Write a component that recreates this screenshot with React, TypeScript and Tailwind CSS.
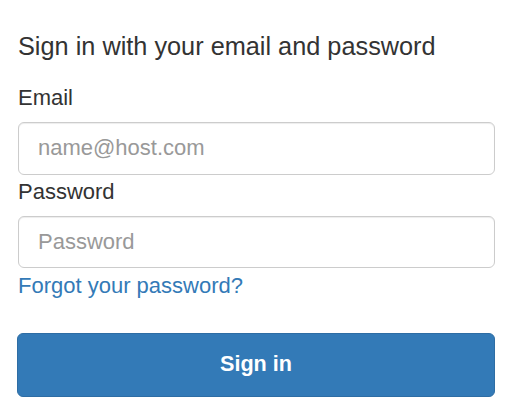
export default function App() {
  return (
    <main className="min-h-screen w-[514px] bg-white px-[18px] pt-[31px] font-['Liberation_Sans',Arial,sans-serif] text-[#333333]">
      <h2 className="text-[25.3px] leading-[30px]">Sign in with your email and password</h2>

      <form className="mt-[22px] flex flex-col" onSubmit={(e) => e.preventDefault()}>
        <label htmlFor="email" className="text-[22px] leading-[30px]">
          Email
        </label>
        <input
          id="email"
          type="email"
          placeholder="name@host.com"
          className="mt-[8.6px] h-[53px] w-[477px] rounded-[6px] border border-[#cccccc] bg-white px-[19px] text-[22px] text-[#555555] shadow-[inset_0_1px_1px_rgba(0,0,0,0.075)] outline-none placeholder:text-[#999999]"
        />

        <label htmlFor="password" className="mt-[2.4px] text-[22px] leading-[30px]">
          Password
        </label>
        <input
          id="password"
          type="password"
          placeholder="Password"
          className="mt-[8.6px] h-[52px] w-[477px] rounded-[6px] border border-[#cccccc] bg-white px-[19px] text-[22px] text-[#555555] shadow-[inset_0_1px_1px_rgba(0,0,0,0.075)] outline-none placeholder:text-[#999999]"
        />

        <a href="#" className="mt-[3.4px] self-start text-[22px] leading-[30px] text-[#337ab7]">
          Forgot your password?
        </a>

        <button
          type="submit"
          className="mt-[31.6px] h-[64px] w-[478px] -ml-px rounded-[6px] border border-[#2e6da4] bg-[#337ab7] text-[21.6px] font-bold text-white"
        >
          Sign in
        </button>
      </form>
    </main>
  );
}
